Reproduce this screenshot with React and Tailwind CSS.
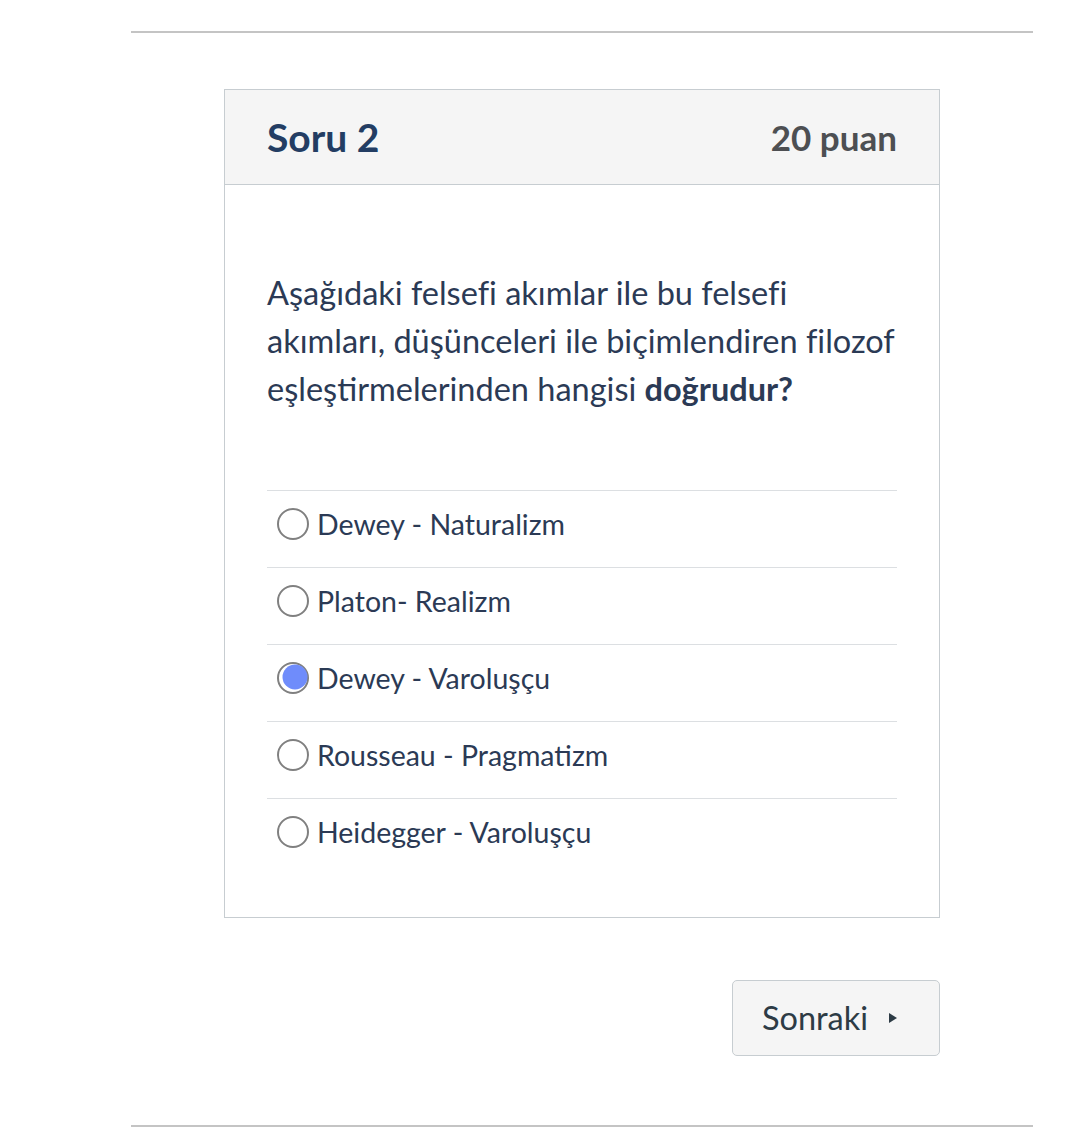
import React from "react";

const options = [
  { label: "Dewey - Naturalizm", checked: false },
  { label: "Platon- Realizm", checked: false },
  { label: "Dewey - Varoluşçu", checked: true },
  { label: "Rousseau - Pragmatizm", checked: false },
  { label: "Heidegger - Varoluşçu", checked: false },
];

function Radio({ checked }) {
  return (
    <svg width="34" height="34" viewBox="0 0 34 34" className="shrink-0">
      <circle cx="17" cy="17" r="15" fill="#fff" stroke="#808080" strokeWidth="2" />
      {checked && <circle cx="19" cy="16" r="12.5" fill="#6f8cfb" />}
    </svg>
  );
}

function NoLig({ children }) {
  return <span className="[font-variant-ligatures:none]">{children}</span>;
}

export default function App() {
  return (
    <div
      className="w-[1080px] h-[1128px] bg-white pt-[31px]"
      style={{ fontFamily: "Lato, 'Noto Sans', sans-serif" }}
    >
      <div className="ml-[131px] w-[902px]">
        <div className="h-[2px] bg-[#c4c4c4]" />
        <div className="mx-auto mt-[56px] w-[716px] border border-[#c7cdd1] h-[829px] flex flex-col">
          <div className="h-[95px] shrink-0 bg-[#f5f5f5] border-b border-[#c7cdd1] flex items-center justify-between px-[42px]">
            <span className="text-[39px] font-bold text-[#233d63] leading-none">Soru 2</span>
            <span className="text-[35px] font-bold text-[#4d4f52] leading-none">20 puan</span>
          </div>
          <div className="px-[42px] pt-[84px]">
            <p className="text-[32.5px] leading-[48px] text-[#2b3a55] whitespace-nowrap">
              Aşağıdaki <NoLig>felsefi</NoLig> akımlar ile bu <NoLig>felsefi</NoLig>
              <br />
              akımları, düşünceleri ile biçimlendiren <NoLig>filozof</NoLig>
              <br />
              eşleştirmelerinden hangisi <strong className="font-bold">doğrudur?</strong>
            </p>
            <div className="mt-[77px]">
              {options.map((o) => (
                <div
                  key={o.label}
                  className="h-[77px] border-t border-[#dcdfe2] flex items-center gap-[7px] pl-[9px] pb-[10px]"
                >
                  <Radio checked={o.checked} />
                  <span className="text-[28.5px] text-[#2b3a55] leading-none">{o.label}</span>
                </div>
              ))}
            </div>
          </div>
        </div>
        <div className="flex justify-end mr-[93px] mt-[62px]">
          <button className="w-[208px] h-[76px] bg-[#f5f5f5] border border-[#c7cdd1] rounded-[5px] flex items-center justify-center gap-[20px] pr-[12px] text-[#2d3b45]">
            <span className="text-[32.5px] leading-none">Sonraki</span>
            <svg width="10" height="12" viewBox="0 0 10 12">
              <path d="M1 1 L9 6 L1 11 Z" fill="#2d3b45" />
            </svg>
          </button>
        </div>
        <div className="mt-[69px] h-[2px] bg-[#c4c4c4]" />
      </div>
    </div>
  );
}
